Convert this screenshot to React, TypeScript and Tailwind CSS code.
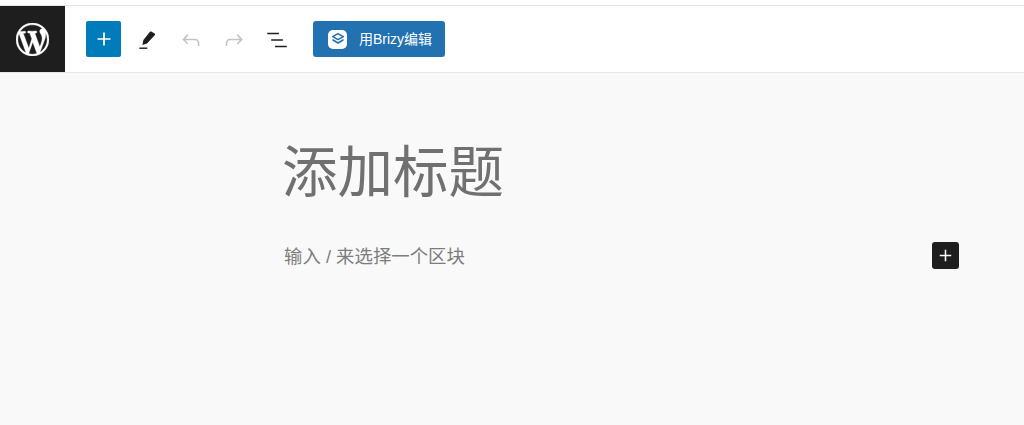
const CJK = "font-['Liberation_Sans','Noto_Sans_CJK_SC',sans-serif]";

function ToolIcon({ d, className }: { d: string; className: string }) {
  return (
    <svg viewBox="0 0 24 24" className={className} fill="currentColor">
      <path d={d} />
    </svg>
  );
}

const PLUS = 'M18 11.2h-5.2V6h-1.6v5.2H6v1.6h5.2V18h1.6v-5.2H18z';
const UNDO = 'M18.3 11.7c-.6-.6-1.4-.9-2.3-.9H6.7l2.9-3.3-1.1-1-4.5 5L8.5 16l1-1-2.7-2.7H16c.5 0 .9.2 1.3.5 1 1 1 3.4 1 4.5v.3h1.5v-.2c0-1.5 0-4.3-1.5-5.7z';
const REDO = 'M15.6 6.5l-1.1 1 2.9 3.3H8c-.9 0-1.7.3-2.3.9-1.4 1.5-1.4 4.2-1.4 5.6v.2h1.5v-.3c0-1.1 0-3.5 1-4.5.3-.3.7-.5 1.3-.5h9.2L14.5 15l1.1 1.1 4.6-4.6-4.6-5z';
const LIST = 'M13.8 5.2H3v1.5h10.8V5.2zm-3.6 12v1.5H21v-1.5H10.2zm7.2-6H6.6v1.5h10.8v-1.5z';
const WP_LOGO =
  'M20 10c0-5.51-4.49-10-10-10C4.48 0 0 4.49 0 10c0 5.52 4.48 10 10 10 5.51 0 10-4.48 10-10zM7.78 15.37L4.37 6.22c.55-.02 1.17-.08 1.17-.08.5-.06.44-1.13-.06-1.11 0 0-1.45.11-2.37.11-.18 0-.37 0-.58-.01C4.12 2.69 6.87 1.11 10 1.11c2.33 0 4.45.87 6.05 2.34-.68-.11-1.65.39-1.65 1.58 0 .74.45 1.36.9 2.1.35.61.55 1.36.55 2.46 0 1.49-1.4 5-1.4 5l-3.03-8.37c.54-.02.82-.17.82-.17.5-.05.44-1.25-.06-1.22 0 0-1.44.12-2.38.12-.87 0-2.33-.12-2.33-.12-.5-.03-.56 1.2-.06 1.22l.92.08 1.26 3.41zM17.41 10c.24-.64.74-1.87.43-4.25.7 1.29 1.05 2.71 1.05 4.25 0 3.29-1.73 6.24-4.4 7.78.97-2.59 1.94-5.2 2.92-7.78zM6.1 18.09C3.12 16.65 1.11 13.53 1.11 10c0-1.3.23-2.48.72-3.59C3.25 10.3 4.67 14.2 6.1 18.09zm4.03-6.63l2.58 6.98c-.86.29-1.76.45-2.71.45-.79 0-1.57-.11-2.29-.33.81-2.38 1.62-4.74 2.42-7.1z';

export default function App() {
  return (
    <div className={`h-[425px] w-[1024px] overflow-hidden bg-[#f9f9f9] ${CJK}`}>
      {/* Top strip */}
      <div className="h-[6px] border-b border-[#e4e4e4] bg-white" />

      {/* Editor toolbar */}
      <div className="flex h-[67px] items-center border-b border-[#e6e6e6] bg-white">
        <div className="flex h-full w-[65px] items-center justify-center bg-[#1e1e1e] text-white">
          <svg viewBox="0 0 20 20" className="mt-[1px] h-[33px] w-[33px]" fill="currentColor" stroke="currentColor" strokeWidth="0.25">
            <path d={WP_LOGO} />
          </svg>
        </div>
        <button className="ml-[21px] flex h-[36px] w-[35px] items-center justify-center rounded-[2px] bg-[#007cba] text-white">
          <ToolIcon d={PLUS} className="h-[26px] w-[26px]" />
        </button>
        <svg viewBox="0 0 17 18" className="ml-[18px] mt-[1px] h-[18px] w-[17px] text-[#1e1e1e]" fill="currentColor">
          <path d="M11 .8c.6-.4 1.1-.4 1.7-.1l2.8 1.7c.7.4.8 1 .4 1.6L8 12.5l-4.6 1.4 1-4.9z" />
          <rect x="0.3" y="16.5" width="8" height="1.4" />
        </svg>
        <ToolIcon d={UNDO} className="ml-[22px] mt-[2px] h-[26px] w-[26px] text-[#c4c4c4]" />
        <ToolIcon d={REDO} className="ml-[17px] mt-[2px] h-[26px] w-[26px] text-[#c4c4c4]" />
        <ToolIcon d={LIST} className="ml-[17px] mt-[2px] h-[26px] w-[26px] text-[#1e1e1e]" />
        <button className="ml-[23px] flex h-[36px] w-[132px] items-center rounded-[3px] bg-[#2271b1] pl-[15px] text-[14px] text-white">
          <span className="flex h-[19px] w-[19px] items-center justify-center rounded-[5px] bg-white">
            <svg viewBox="0 0 24 24" className="h-[16px] w-[16px]" fill="none" stroke="#2271b1" strokeWidth="2.4" strokeLinejoin="round" strokeLinecap="round">
              <path d="M12 4l8 4.5-8 4.5-8-4.5z" />
              <path d="M4.5 13.5L12 18l7.5-4.5" />
            </svg>
          </span>
          <span className="ml-[12px]">用Brizy编辑</span>
        </button>
      </div>

      {/* Canvas */}
      <div className="pl-[284px] pr-[65px]">
        <h1 className="ml-[-2px] mt-[65px] h-[70px] text-[55.5px] font-normal leading-[70px] text-[#707070]">添加标题</h1>
        <div className="mt-[34px] flex h-[27px] items-center justify-between">
          <p className="mt-[2px] text-[18.4px] text-[#7d7d7d]">输入 / 来选择一个区块</p>
          <button className="flex h-[27px] w-[27px] items-center justify-center rounded-[3px] bg-[#1e1e1e] text-white">
            <ToolIcon d={PLUS} className="h-[23px] w-[23px]" />
          </button>
        </div>
      </div>
    </div>
  );
}
